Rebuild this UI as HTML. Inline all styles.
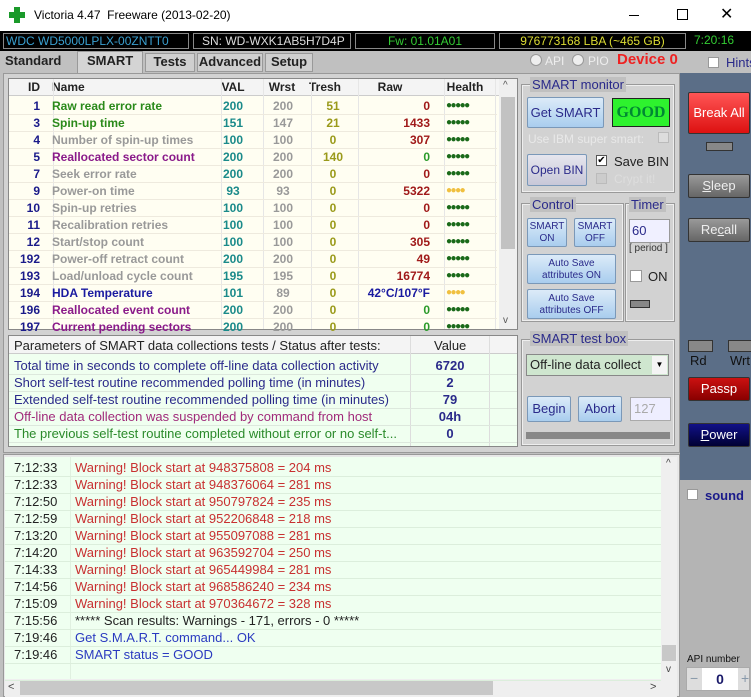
<!DOCTYPE html><html><head><style>
*{margin:0;padding:0;box-sizing:border-box}
body{width:751px;height:697px;overflow:hidden;background:#c0c0c0;font-family:"Liberation Sans",sans-serif;font-size:12px;position:relative}
.a{position:absolute;white-space:nowrap}
.btn{position:absolute;background:linear-gradient(#dcebf8,#a9cdee);border:1px solid #7a98b8;border-radius:2px;color:#2a2a8a;text-align:center;font-size:12px}
.dk{position:absolute;border:1px solid #333;border-radius:2px;color:#fff;text-align:center;font-size:13px}
table{border-collapse:collapse}
.grp{position:absolute;border:1px solid #eee;outline:1px solid #999}
.lg{position:absolute;background:#c0c0c0;color:#2a2a8a;font-size:13px;padding:0 2px}
</style></head><body>
<div class="a" style="left:0;top:0;width:751px;height:31px;background:#fff"></div>
<div class="a" style="left:9px;top:7px;width:16px;height:16px"><div class="a" style="left:5px;top:0;width:6px;height:16px;background:#1a9a2a"></div><div class="a" style="left:0;top:5px;width:16px;height:6px;background:#1a9a2a"></div></div>
<div class="a" style="left:34px;top:8px;font-size:12px;color:#000">Victoria 4.47&nbsp; Freeware (2013-02-20)</div>
<div class="a" style="left:629px;top:15px;width:10px;height:1px;background:#000"></div>
<div class="a" style="left:677px;top:9px;width:11px;height:11px;border:1px solid #000"></div>
<div class="a" style="left:720px;top:4px;font-size:16px;color:#000">✕</div>
<div class="a" style="left:0;top:31px;width:751px;height:20px;background:#000"></div>
<div class="a" style="left:3px;top:33px;width:186px;height:16px;border:1px solid #888;color:#3aa0d0;font-size:12px;padding-left:2px;line-height:14px">WDC WD5000LPLX-00ZNTT0</div>
<div class="a" style="left:193px;top:33px;width:158px;height:16px;border:1px solid #888;color:#ddd;padding-left:8px;line-height:14px">SN: WD-WXK1AB5H7D4P</div>
<div class="a" style="left:355px;top:33px;width:140px;height:16px;border:1px solid #888;color:#3c3;text-align:center;line-height:14px">Fw: 01.01A01</div>
<div class="a" style="left:499px;top:33px;width:187px;height:16px;border:1px solid #888;color:#dd3;text-align:center;line-height:14px">976773168 LBA (~465 GB)</div>
<div class="a" style="left:694px;top:33px;color:#3c3;line-height:14px">7:20:16</div>
<div class="a" style="left:5px;top:53px;font-size:13px;font-weight:bold;color:#222">Standard</div>
<div class="a" style="left:77px;top:51px;width:66px;height:22px;background:#d4d4d4;border:1px solid #999;border-bottom:none"></div>
<div class="a" style="left:87px;top:53px;font-size:13px;font-weight:bold;color:#222">SMART</div>
<div class="a" style="left:145px;top:53px;width:50px;height:19px;border:1px solid #999;background:#cfcfcf;font-size:13px;font-weight:bold;text-align:center;color:#222">Tests</div>
<div class="a" style="left:197px;top:53px;width:66px;height:19px;border:1px solid #999;background:#cfcfcf;font-size:13px;font-weight:bold;text-align:center;color:#222">Advanced</div>
<div class="a" style="left:265px;top:53px;width:48px;height:19px;border:1px solid #999;background:#cfcfcf;font-size:13px;font-weight:bold;text-align:center;color:#222">Setup</div>
<div class="a" style="left:530px;top:54px;width:12px;height:12px;border-radius:50%;background:#eee;border:1px solid #999"></div>
<div class="a" style="left:545px;top:54px;color:#eee;font-size:12px">API</div>
<div class="a" style="left:572px;top:54px;width:12px;height:12px;border-radius:50%;background:#eee;border:1px solid #999"></div>
<div class="a" style="left:588px;top:54px;color:#eee;font-size:12px">PIO</div>
<div class="a" style="left:617px;top:51px;color:#e22;font-size:15px;font-weight:bold">Device 0</div>
<div class="a" style="left:708px;top:57px;width:11px;height:11px;background:#fff;border:1px solid #999"></div>
<div class="a" style="left:726px;top:55px;color:#2a2a8a;font-size:13px">Hints</div>
<div class="a" style="left:3px;top:73px;width:677px;height:380px;background:#d2d2d2;border:1px solid #999"></div>
<div class="a" style="left:680px;top:73px;width:71px;height:407px;background:#5b6e87"></div>
<div class="a" style="left:680px;top:480px;width:71px;height:217px;background:#b4b4b4"></div>
<div class="dk" style="left:688px;top:92px;width:62px;height:42px;background:linear-gradient(#f55,#d11);line-height:40px;font-size:13px">Break All</div>
<div class="a" style="left:706px;top:142px;width:27px;height:9px;background:#888;border:1px solid #333"></div>
<div class="dk" style="left:688px;top:174px;width:62px;height:24px;background:linear-gradient(#999,#666);line-height:22px;color:#eee"><u>S</u>leep</div>
<div class="dk" style="left:688px;top:218px;width:62px;height:24px;background:linear-gradient(#999,#666);line-height:22px;color:#eee">Re<u>c</u>all</div>
<div class="a" style="left:688px;top:340px;width:25px;height:12px;background:#888;border:1px solid #333"></div>
<div class="a" style="left:728px;top:340px;width:25px;height:12px;background:#888;border:1px solid #333"></div>
<div class="a" style="left:690px;top:353px;color:#111;font-size:13px">Rd</div>
<div class="a" style="left:730px;top:353px;color:#111;font-size:13px">Wrt</div>
<div class="dk" style="left:688px;top:377px;width:62px;height:24px;background:linear-gradient(#c11,#800);line-height:22px">Passp</div>
<div class="dk" style="left:688px;top:423px;width:62px;height:24px;background:linear-gradient(#118,#003);line-height:22px"><u>P</u>ower</div>
<div class="a" style="left:687px;top:489px;width:11px;height:11px;background:#fff;border:1px solid #999"></div>
<div class="a" style="left:705px;top:488px;color:#1a1a8a;font-size:13px;font-weight:bold">sound</div>
<div class="a" style="left:687px;top:654px;color:#111;font-size:10px">API number</div>
<div class="a" style="left:686px;top:667px;width:64px;height:24px;background:#ddd;border:1px solid #aaa"></div>
<div class="a" style="left:702px;top:668px;width:36px;height:22px;background:#fff;text-align:center;font-weight:bold;color:#1a1a6a;font-size:14px;line-height:22px">0</div>
<div class="a" style="left:690px;top:670px;color:#89a;font-size:14px">−</div>
<div class="a" style="left:741px;top:670px;color:#89a;font-size:14px">+</div>
<div class="a" style="left:8px;top:78px;width:510px;height:252px;background:#fffef2;border:1px solid #888;overflow:hidden">
<div class="a" style="left:490px;top:0;width:18px;height:252px;background:#efefef"></div>
<div class="a" style="left:492px;top:18px;width:14px;height:152px;background:#c2c2c2"></div>
<div class="a" style="left:494px;top:1px;font-size:10px;color:#555">^</div>
<div class="a" style="left:494px;top:236px;font-size:10px;color:#555">v</div>
<div class="a" style="left:0;top:0;width:490px;height:17px;background:#f4f4f4;border-bottom:1px solid #ccc"></div>
</div>
<div id="st"></div>
<div class="a" style="left:8px;top:335px;width:510px;height:112px;background:#f0fff0;border:1px solid #888"></div>
<div class="a" style="left:9px;top:336px;width:508px;height:18px;background:#f4f4f4;border-bottom:1px solid #ccc"></div>
<div class="a" style="left:410px;top:336px;width:1px;height:110px;background:#ddd"></div>
<div class="a" style="left:489px;top:336px;width:1px;height:110px;background:#ddd"></div>
<div class="a" style="left:14px;top:338px;color:#222;font-size:13px">Parameters of SMART data collections tests / Status after tests:</div>
<div class="a" style="left:434px;top:338px;color:#222;font-size:13px">Value</div>
<div id="pt"></div>
<div class="grp" style="left:522px;top:85px;width:152px;height:107px"></div>
<div class="lg" style="left:530px;top:77px">SMART monitor</div>
<div class="btn" style="left:527px;top:97px;width:77px;height:31px;line-height:29px;font-size:13px">Get SMART</div>
<div class="a" style="left:612px;top:98px;width:58px;height:29px;background:#2ef22e;border:1px solid #222;font-family:'Liberation Serif',serif;font-weight:bold;font-size:16px;text-align:center;line-height:27px;color:#083">GOOD</div>
<div class="a" style="left:528px;top:132px;color:#e8e8e8;font-size:12px">Use IBM super smart:</div>
<div class="a" style="left:658px;top:132px;width:11px;height:11px;background:#ddd;border:1px solid #bbb"></div>
<div class="btn" style="left:527px;top:154px;width:60px;height:32px;line-height:30px;background:linear-gradient(#e6e6ee,#c8c8d8)">Open BIN</div>
<div class="a" style="left:596px;top:155px;width:11px;height:11px;background:#fff;border:1px solid #555;font-size:10px;line-height:9px;text-align:center">✔</div>
<div class="a" style="left:614px;top:154px;color:#222;font-size:13px">Save BIN</div>
<div class="a" style="left:596px;top:173px;width:11px;height:11px;background:#ccc;border:1px solid #bbb"></div>
<div class="a" style="left:614px;top:172px;color:#ddd;font-size:12px">Crypt it!</div>
<div class="grp" style="left:522px;top:204px;width:101px;height:117px"></div>
<div class="lg" style="left:530px;top:197px">Control</div>
<div class="grp" style="left:626px;top:204px;width:48px;height:117px"></div>
<div class="lg" style="left:629px;top:197px">Timer</div>
<div class="btn" style="left:527px;top:218px;width:40px;height:29px;font-size:10px;line-height:12px;padding-top:2px">SMART<br>ON</div>
<div class="btn" style="left:574px;top:218px;width:42px;height:29px;font-size:10px;line-height:12px;padding-top:2px">SMART<br>OFF</div>
<div class="btn" style="left:527px;top:254px;width:89px;height:30px;font-size:10px;line-height:12px;padding-top:3px">Auto Save<br>attributes ON</div>
<div class="btn" style="left:527px;top:289px;width:89px;height:30px;font-size:10px;line-height:12px;padding-top:3px">Auto Save<br>attributes OFF</div>
<div class="a" style="left:629px;top:219px;width:41px;height:24px;background:#f0f0ff;border:1px solid #999;color:#2a2a8a;font-size:13px;padding:3px 2px">60</div>
<div class="a" style="left:629px;top:243px;color:#333;font-size:10px">[ period ]</div>
<div class="a" style="left:630px;top:270px;width:12px;height:12px;background:#fff;border:1px solid #999"></div>
<div class="a" style="left:648px;top:269px;color:#222;font-size:13px">ON</div>
<div class="a" style="left:630px;top:300px;width:20px;height:8px;background:#888;border:1px solid #333"></div>
<div class="grp" style="left:522px;top:340px;width:152px;height:105px"></div>
<div class="lg" style="left:530px;top:331px">SMART test box</div>
<div class="a" style="left:526px;top:354px;width:143px;height:22px;background:#cfe6cf;border:1px solid #888;color:#222;font-size:13px;padding:2px 3px">Off-line data collect</div>
<div class="a" style="left:652px;top:356px;width:15px;height:18px;background:#f4f4f4;font-size:8px;text-align:center;line-height:18px">▼</div>
<div class="btn" style="left:527px;top:396px;width:44px;height:26px;line-height:24px;font-size:13px">Begin</div>
<div class="btn" style="left:578px;top:396px;width:44px;height:26px;line-height:24px;font-size:13px">Abort</div>
<div class="a" style="left:630px;top:397px;width:41px;height:24px;background:#eef;border:1px solid #aaa;color:#aaa;font-size:13px;padding:3px">127</div>
<div class="a" style="left:526px;top:432px;width:144px;height:7px;background:#888"></div>
<div class="a" style="left:3px;top:454px;width:677px;height:243px;background:#e8e8e8;border:1px solid #999"></div>
<div class="a" style="left:5px;top:457px;width:656px;height:222px;background:#effff0"></div>
<div class="a" style="left:70px;top:457px;width:1px;height:222px;background:#e0f0e0"></div>
<div class="a" style="left:661px;top:457px;width:16px;height:222px;background:#efefef"></div>
<div class="a" style="left:662px;top:645px;width:14px;height:16px;background:#c8c8c8"></div>
<div class="a" style="left:666px;top:458px;font-size:10px;color:#444">^</div>
<div class="a" style="left:666px;top:664px;font-size:10px;color:#444">v</div>
<div class="a" style="left:5px;top:679px;width:672px;height:18px;background:#efefef"></div>
<div class="a" style="left:20px;top:681px;width:473px;height:14px;background:#c8c8c8"></div>
<div class="a" style="left:8px;top:681px;font-size:11px;color:#444">&lt;</div>
<div class="a" style="left:650px;top:681px;font-size:11px;color:#444">&gt;</div>
<div id="lg"></div>
<script>
var R=[["1","Raw read error rate","#2a8a1a","200","200","51","0","#a01a1a",1],
["3","Spin-up time","#2a8a1a","151","147","21","1433","#a01a1a",1],
["4","Number of spin-up times","#999","100","100","0","307","#a01a1a",1],
["5","Reallocated sector count","#8a1a8a","200","200","140","0","#2a9a2a",1],
["7","Seek error rate","#999","200","200","0","0","#a01a1a",1],
["9","Power-on time","#999","93","93","0","5322","#a01a1a",0],
["10","Spin-up retries","#999","100","100","0","0","#a01a1a",1],
["11","Recalibration retries","#999","100","100","0","0","#a01a1a",1],
["12","Start/stop count","#999","100","100","0","305","#a01a1a",1],
["192","Power-off retract count","#999","200","200","0","49","#a01a1a",1],
["193","Load/unload cycle count","#999","195","195","0","16774","#a01a1a",1],
["194","HDA Temperature","#1a1aa0","101","89","0","42°C/107°F","#1a1aa0",0],
["196","Reallocated event count","#8a1a8a","200","200","0","0","#2a9a2a",1],
["197","Current pending sectors","#8a1a8a","200","200","0","0","#2a9a2a",1]];
var h='';
function c(x,y,w,al,col,t,b){return '<div class="a" style="left:'+x+'px;top:'+y+'px;width:'+w+'px;text-align:'+al+';color:'+col+';font-size:12px;'+(b?'font-weight:bold;':'')+'">'+t+'</div>';}
var hy=80;
h+=c(10,hy,30,'right','#222','ID',1)+c(52,hy,100,'left','#222','Name',1)+c(213,hy,40,'center','#222','VAL',1)+c(262,hy,40,'center','#222','Wrst',1)+c(305,hy,40,'center','#222','Tresh',1)+c(360,hy,60,'center','#222','Raw',1)+c(440,hy,50,'center','#222','Health',1);
[45,213,255,303,350,436,487].forEach(function(x){h+='<div class="a" style="left:'+(8+x)+'px;top:79px;width:1px;height:250px;background:#e6e6e6"></div>';});
R.forEach(function(r,i){var y=99+i*17;if(y>320)y=320;
h+='<div class="a" style="left:9px;top:'+(y+15)+'px;width:488px;height:1px;background:#eeeade"></div>';
h+=c(8,y,32,'right','#1a1a8a',r[0],1)+c(52,y,170,'left',r[2],r[1],1)+c(213,y,40,'center','#1a8a8a',r[3],1)+c(263,y,40,'center','#999',r[4],1)+c(313,y,40,'center','#9a9a1a',r[5],1)+c(340,y,90,'right',r[7],r[6],1)+c(446,y,50,'left',r[8]?'#1a6a1a':'#f0c040',r[8]?'●●●●●':'●●●●',0).replace('font-size:12px','font-size:10px;margin-top:1px;letter-spacing:-1.5px');});
document.getElementById('st').innerHTML=h;
var P=[["Total time in seconds to complete off-line data collection activity","#2a2a8a","6720"],["Short self-test routine recommended polling time (in minutes)","#2a2a8a","2"],["Extended self-test routine recommended polling time (in minutes)","#2a2a8a","79"],["Off-line data collection was suspended by command from host","#a02a7a","04h"],["The previous self-test routine completed without error or no self-t...","#2a8a2a","0"]];
h='';P.forEach(function(p,i){var y=358+i*17;h+='<div class="a" style="left:14px;top:'+y+'px;color:'+p[1]+';font-size:13px">'+p[0]+'</div><div class="a" style="left:410px;width:80px;text-align:center;top:'+y+'px;color:#2a2a8a;font-size:13px;font-weight:bold">'+p[2]+'</div><div class="a" style="left:9px;top:'+(y+16)+'px;width:508px;height:1px;background:#dde8dd"></div>';});
document.getElementById('pt').innerHTML=h;
var L=[["7:12:33","948375808","204"],["7:12:33","948376064","281"],["7:12:50","950797824","235"],["7:12:59","952206848","218"],["7:13:20","955097088","281"],["7:14:20","963592704","250"],["7:14:33","965449984","281"],["7:14:56","968586240","234"],["7:15:09","970364672","328"]];
h='';L.forEach(function(l,i){var y=460+i*17;h+='<div class="a" style="left:14px;top:'+y+'px;font-size:13px;color:#222">'+l[0]+'</div><div class="a" style="left:75px;top:'+y+'px;font-size:13px;color:#c83030">Warning! Block start at '+l[1]+' = '+l[2]+' ms</div>';});
var E=[["7:15:56","***** Scan results: Warnings - 171, errors - 0 *****","#222"],["7:19:46","Get S.M.A.R.T. command... OK","#2a3ac0"],["7:19:46","SMART status = GOOD","#2a3ac0"]];
E.forEach(function(l,i){var y=460+(9+i)*17;h+='<div class="a" style="left:14px;top:'+y+'px;font-size:13px;color:#222">'+l[0]+'</div><div class="a" style="left:75px;top:'+y+'px;font-size:13px;color:'+l[2]+'">'+l[1]+'</div>';});
for(var i=0;i<13;i++)h+='<div class="a" style="left:5px;top:'+(476+i*17)+'px;width:656px;height:1px;background:#dceedc"></div>';
document.getElementById('lg').innerHTML=h;
</script>
</body></html>
